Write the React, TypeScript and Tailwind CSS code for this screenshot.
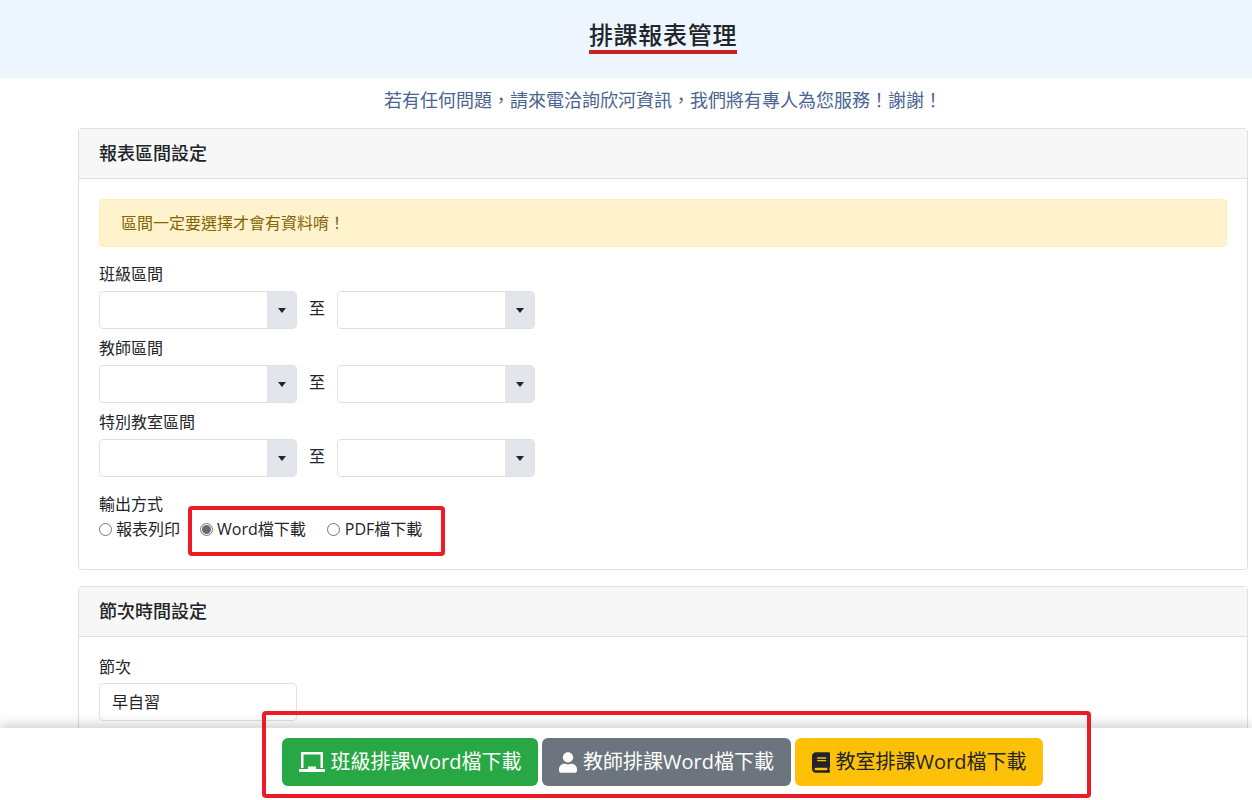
import { FaUser, FaBook } from 'react-icons/fa';

const NOTICE = '若有任何問題\uFF0C請來電洽詢欣河資訊\uFF0C我們將有專人為您服務\uFF01謝謝\uFF01';
const ALERT = '區間一定要選擇才會有資料唷\uFF01';

function Select() {
  return (
    <div className="flex h-[38px] w-[198px] overflow-hidden rounded border border-[#dee2e6] bg-white">
      <div className="flex-1" />
      <div className="flex w-[29px] items-center justify-center bg-[#e2e5ea]">
        <div className="h-0 w-0 border-x-[4px] border-t-[5px] border-x-transparent border-t-[#212529]" />
      </div>
    </div>
  );
}

function RangeRow({ label }: { label: string }) {
  return (
    <div>
      <div className="h-[24px] leading-[24px]">{label}</div>
      <div className="mt-[5px] flex items-center gap-[12px] pb-[7px]">
        <Select />
        <span className="-mt-[5px] w-[16px] text-center leading-[24px]">至</span>
        <Select />
      </div>
    </div>
  );
}

function Radio({ checked }: { checked?: boolean }) {
  return (
    <span className="mr-[4px] flex h-[13px] w-[13px] items-center justify-center rounded-full border border-[#767676] bg-white">
      {checked && <span className="h-[9px] w-[9px] rounded-full bg-[#6b6b6b]" />}
    </span>
  );
}

function LaptopIcon() {
  return (
    <svg viewBox="0 0 26 20" className="h-[20px] w-[26px]" fill="currentColor">
      <path d="M2 0h22v16h-2.5V2.5h-17V16H2z" />
      <path d="M9 14.5h8V17H9z" />
      <path d="M0 17h26v3H0z" />
    </svg>
  );
}

export default function App() {
  return (
    <div className="relative h-[800px] w-[1252px] overflow-hidden bg-white font-['Open_Sans','Noto_Sans_CJK_TC',sans-serif] text-[16px] text-[#212529]">
      {/* Title */}
      <div className="flex h-[78px] items-start justify-center bg-[#edf5fe] pl-[74px] pt-[22px]">
        <h1 className="border-b-[4px] border-[#c9241c] pb-[2px] text-[24px] font-medium leading-[26px] tracking-[0.7px]">排課報表管理</h1>
      </div>
      <p className="mt-[10px] h-[40px] pl-[74px] text-center text-[18px] leading-[24px] text-[#4a6491]">{NOTICE}</p>

      <div className="ml-[78px] w-[1170px]">
        {/* 報表區間設定 */}
        <div className="rounded border border-[#dfdfdf]">
          <div className="flex h-[50px] items-center border-b border-[#dfdfdf] bg-[#f7f7f7] px-[20px] text-[18px] font-medium">報表區間設定</div>
          <div className="px-[20px] pt-[20px]">
            <div className="flex h-[48px] items-center rounded border border-[#ffeeba] bg-[#fff3cd] px-[21px] text-[#856404]">{ALERT}</div>
            <div className="mt-[15px]">
              <RangeRow label="班級區間" />
              <RangeRow label="教師區間" />
              <RangeRow label="特別教室區間" />
            </div>
            <div className="mt-[8px] h-[24px] leading-[24px]">輸出方式</div>
            <div className="relative flex h-[53px] items-start pt-[1px]">
              <label className="flex h-[24px] items-center"><Radio />報表列印</label>
              <label className="ml-[20px] flex h-[24px] items-center"><Radio checked />Word檔下載</label>
              <label className="ml-[21px] flex h-[24px] items-center"><Radio /><span className="ml-[1px]">PDF檔下載</span></label>
              {/* annotation box */}
              <div className="absolute left-[89px] top-[-10px] h-[50px] w-[257px] rounded-sm border-[4px] border-[#ed1c24]" />
            </div>
          </div>
        </div>

        {/* 節次時間設定 */}
        <div className="mt-[16px] h-[200px] rounded border border-[#dfdfdf]">
          <div className="flex h-[50px] items-center border-b border-[#dfdfdf] bg-[#f7f7f7] px-[20px] text-[18px] font-medium">節次時間設定</div>
          <div className="px-[20px] pt-[18px]">
            <div className="h-[24px] leading-[24px]">節次</div>
            <div className="mt-[4px] flex h-[38px] w-[198px] items-center rounded border border-[#dee2e6] px-[12px]">早自習</div>
          </div>
        </div>
      </div>

      {/* Bottom bar */}
      <div className="absolute bottom-0 left-0 flex h-[72px] w-full items-start bg-white pl-[282px] pt-[10px] shadow-[0_-3px_12px_rgba(0,0,0,0.2)]">
        <div className="flex gap-[4px] text-[20px]">
          <button className="flex h-[48px] w-[256px] items-center justify-center gap-[6px] rounded-md bg-[#28a745] text-white">
            <LaptopIcon />班級排課Word檔下載
          </button>
          <button className="flex h-[48px] w-[249px] items-center justify-center gap-[6px] rounded-md bg-[#6c757d] text-white">
            <FaUser className="h-[21px] w-[18px]" />教師排課Word檔下載
          </button>
          <button className="flex h-[48px] w-[248px] items-center justify-center gap-[6px] rounded-md bg-[#ffc107] text-[#212529]">
            <FaBook className="h-[21px] w-[18px]" />教室排課Word檔下載
          </button>
        </div>
      </div>
      <div className="absolute left-[262px] top-[711px] h-[87px] w-[829px] rounded-sm border-[4px] border-[#ed1c24]" />
    </div>
  );
}
